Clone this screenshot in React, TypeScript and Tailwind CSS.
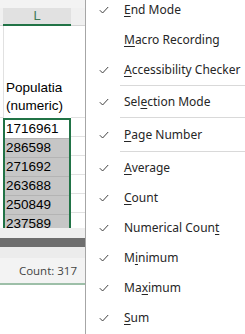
const menu: { label: string; u: number; checked: boolean; h: string; sep?: boolean }[] = [
  { label: "End Mode", u: 0, checked: true, h: "h-[30px]" },
  { label: "Macro Recording", u: 0, checked: false, h: "h-[30px]" },
  { label: "Accessibility Checker", u: 0, checked: true, h: "h-[30px]", sep: true },
  { label: "Selection Mode", u: 3, checked: true, h: "h-[31px]", sep: true },
  { label: "Page Number", u: 0, checked: true, h: "h-[33px]", sep: true },
  { label: "Average", u: 0, checked: true, h: "h-[31px]" },
  { label: "Count", u: 0, checked: true, h: "h-[30px]" },
  { label: "Numerical Count", u: 14, checked: true, h: "h-[30px]" },
  { label: "Minimum", u: 1, checked: true, h: "h-[30px]" },
  { label: "Maximum", u: 2, checked: true, h: "h-[30px]" },
  { label: "Sum", u: 0, checked: true, h: "h-[30px]" },
];

const values = ["286598", "271692", "263688", "250849", "237589"];

function Check() {
  return (
    <svg width="10" height="8" viewBox="0 0 10 8" className="text-[#404040]">
      <path d="M0.8 4.2 L3.6 7 L9.2 1" fill="none" stroke="currentColor" strokeWidth="1" />
    </svg>
  );
}

function Label({ text, u }: { text: string; u: number }) {
  return (
    <span className="ml-[3px]">
      {text.slice(0, u)}
      <span className="underline underline-offset-2">{text[u]}</span>
      {text.slice(u + 1)}
    </span>
  );
}

export default function App() {
  return (
    <div className="flex h-[334px] w-[245px] overflow-hidden bg-white">
      {/* sheet */}
      <div className="flex w-[86px] shrink-0 flex-col border-r border-[#a6a6a6] font-['Liberation_Sans',sans-serif]">
        <div className="h-[8px] bg-[#f3f3f3]" />
        <div className="flex h-[18px]">
          <div className="w-[3px] border-b border-[#d4d4d4] bg-[#f0f0f0]" />
          <div className="flex w-[68px] items-center justify-center border-b-2 border-[#217346] bg-[#e1e1e1] text-[13px] text-[#3f7a57]">
            L
          </div>
          <div className="flex-1 border-b border-[#d4d4d4] bg-[#f0f0f0]" />
        </div>
        <div className="flex h-[202px] overflow-hidden">
          <div className="w-[3px] shrink-0">
            <div className="h-[92px] border-b border-[#e1e1e1]" />
          </div>
          <div className="w-[68px] shrink-0 text-[13.5px] leading-none text-black">
            <div className="flex h-[92px] flex-col justify-end border-l border-[#e1e1e1] pb-[3px] pl-[2px] leading-[18px]">
              <div>Populatia</div>
              <div>(numeric)</div>
            </div>
            <div className="border-x-2 border-t-2 border-[#217346]">
              <div className="flex h-[18px] items-center pl-[1px]">1716961</div>
              {values.map((v) => (
                <div key={v} className="flex h-[19px] items-center border-t border-[#b4b4b4] bg-[#c6c6c6] pl-[1px]">
                  {v}
                </div>
              ))}
            </div>
          </div>
          <div className="flex-1">
            <div className="h-[92px] border-b border-[#e1e1e1]" />
            {values.concat("x").map((v) => (
              <div key={v} className="h-[19px] border-b border-[#e1e1e1]" />
            ))}
          </div>
        </div>
        <div className="h-[10px] bg-[#efefef]" />
        <div className="h-[9px] bg-[#6e6e6e]" />
        <div className="h-[11px] bg-[#ececec]" />
        <div className="flex h-[27px] items-center justify-end border-b-2 border-[#9dbfa8] bg-[#f3f3f3] pr-[8px] font-['Open_Sans',sans-serif] text-[11.5px] text-[#444]">
          Count: 317
        </div>
        <div className="flex-1 bg-white" />
      </div>
      {/* menu */}
      <div className="mt-[-5px] flex-1 font-['Noto_Sans',sans-serif] text-[12px] text-[#262626]">
        {menu.map((m) => (
          <div key={m.label}>
            <div className={`flex items-center ${m.h}`}>
              <div className="flex w-[35px] justify-center">{m.checked && <Check />}</div>
              <Label text={m.label} u={m.u} />
            </div>
            {m.sep && <div className="ml-[34px] h-px bg-[#d9d9d9]" />}
          </div>
        ))}
      </div>
    </div>
  );
}
